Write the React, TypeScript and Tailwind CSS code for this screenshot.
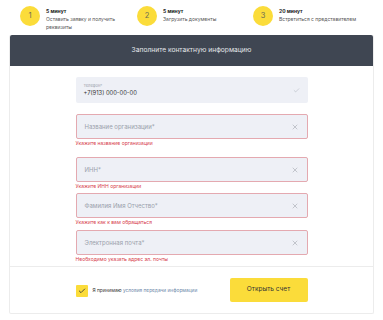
import { Check, X } from 'lucide-react';

const steps = [
  { n: '1', title: '5 минут', text: 'Оставить заявку и получить реквизиты', w: 'w-[117px]', tw: 'w-[78px]' },
  { n: '2', title: '5 минут', text: 'Загрузить документы', w: 'w-[116px]', tw: 'w-[80px]' },
  { n: '3', title: '20 минут', text: 'Встретиться с представителем', w: 'w-[125px]', tw: 'w-[95px]' },
];

function Step({ n, title, text, w, tw }: { n: string; title: string; text: string; w: string; tw: string }) {
  return (
    <div className={`${w} flex items-start gap-[6px]`}>
      <div className="w-[20px] h-[20px] shrink-0 rounded-full bg-[#fbdc3a] flex items-center justify-center text-[7.5px] text-[#6b6a55]">
        {n}
      </div>
      <div className={`pt-[1px] ${tw}`}>
        <div className="text-[5px] leading-[8px] font-bold text-[#222]">{title}</div>
        <div className="text-[5px] leading-[8px] text-[#555]">{text}</div>
      </div>
    </div>
  );
}

function ErrorField({ placeholder, error, mt }: { placeholder: string; error: string; mt: string }) {
  return (
    <div className={mt}>
      <div className="h-[25px] rounded-[2px] border border-[#e4a9b0] bg-[#eef0f6] flex items-center justify-between px-[8px]">
        <span className="text-[6px] text-[#9aa0ab]">{placeholder}</span>
        <X size={8} strokeWidth={1.4} className="text-[#8f939b]" />
      </div>
      <p className="mt-[1px] text-[5px] leading-[6px] text-[#d63a4a]">{error}</p>
    </div>
  );
}

export default function App() {
  return (
    <div className="w-[383px] h-[320px] bg-white font-['Inter','Liberation_Sans',sans-serif] overflow-hidden">
      <div className="flex pl-[20px] pt-[6px] h-[35px]">
        {steps.map(s => (
          <Step key={s.n} {...s} />
        ))}
      </div>

      <div className="mx-[9px] border border-[#ececec] border-t-0 rounded-[2px]">
        <div className="h-[31px] bg-[#3f4652] rounded-t-[2px] flex items-center justify-center text-[6.7px] text-[#e4e6ea]">
          Заполните контактную информацию
        </div>

        <div className="w-[232px] mx-auto pt-[11px]">
          <div className="h-[26px] rounded-[2px] bg-[#eef0f6] flex items-center justify-between px-[8px]">
            <div className="flex flex-col">
              <span className="text-[4px] leading-[6px] text-[#9aa0ab]">Телефон*</span>
              <span className="text-[5.8px] leading-[8px] text-[#333]">+7(913) 000-00-00</span>
            </div>
            <Check size={7} strokeWidth={1.4} className="text-[#9aa0ab]" />
          </div>

          <ErrorField mt="mt-[11px]" placeholder="Название организации*" error="Укажите название организации" />
          <ErrorField mt="mt-[11px]" placeholder="ИНН*" error="Укажите ИНН организации" />
          <ErrorField mt="mt-[4px]" placeholder="Фамилия Имя Отчество*" error="Укажите как к вам обращаться" />
          <ErrorField mt="mt-[5px]" placeholder="Электронная почта*" error="Необходимо указать адрес эл. почты" />
        </div>

        <div className="mt-[4px] border-t border-[#ececec] h-[47px] flex items-center justify-center">
          <div className="w-[232px] flex items-center justify-between">
            <div className="flex items-center gap-[5px] pt-[2px]">
              <div className="w-[12px] h-[12px] rounded-[1px] bg-[#fbdc3a] flex items-center justify-center">
                <Check size={8} strokeWidth={2.5} className="text-[#333]" />
              </div>
              <span className="text-[4.8px] text-[#333]">
                Я принимаю <span className="text-[#6a86a8]">условия передачи информации</span>
              </span>
            </div>
            <button className="w-[78px] h-[24px] rounded-[2px] bg-[#fbdc3a] text-[6.5px] text-[#333]">
              Открыть счет
            </button>
          </div>
        </div>
      </div>
    </div>
  );
}
